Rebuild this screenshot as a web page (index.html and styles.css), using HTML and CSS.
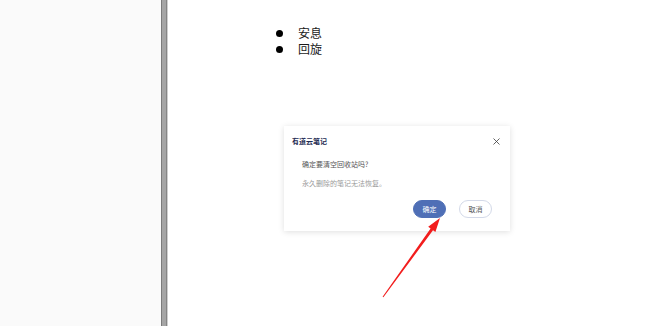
FILE: index.html
```html
<!DOCTYPE html>
<html lang="zh-CN">
<head>
    <meta charset="UTF-8">
    <meta name="viewport" content="width=device-width, initial-scale=1.0">
    <title>有道云笔记</title>
    <link rel="stylesheet" href="styles.css">
</head>
<body>
    <div class="sidebar"></div>
    <div class="divider"></div>
    <div class="page">
        <ul class="notes">
            <li><span class="dot"></span>安息</li>
            <li><span class="dot"></span>回旋</li>
        </ul>

        <div class="dialog">
            <div class="dialog-head">
                <span class="dialog-title">有道云笔记</span>
                <svg class="close" width="7" height="7" viewBox="0 0 7 7">
                    <path d="M0.5 0.5 L6.5 6.5 M6.5 0.5 L0.5 6.5" stroke="#3a3a3a" stroke-width="0.8" fill="none"/>
                </svg>
            </div>
            <p class="msg">确定要清空回收站吗?</p>
            <p class="hint">永久删除的笔记无法恢复。</p>
            <div class="actions">
                <button class="btn btn-ok">确定</button>
                <button class="btn btn-cancel">取消</button>
            </div>
        </div>
    </div>

    <svg class="arrow" width="650" height="326" viewBox="0 0 650 326">
        <polygon points="382.6,296.7 430.6,228.5 428.2,226.8 440,218 435.4,232 433,230.3 383.4,297.3" fill="#f21d1d"/>
    </svg>
</body>
</html>
```

FILE: styles.css
```css
body {
    margin: 0;
    height: 326px;
    display: flex;
    overflow: hidden;
    position: relative;
    font-family: 'Liberation Serif', 'Noto Sans CJK SC', serif;
    background: #ffffff;
}
.sidebar {
    width: 161px;
    background-color: #fafafa;
}
.divider {
    width: 7px;
    background: linear-gradient(to right,
        #7b7b7b 0, #7b7b7b 1px,
        #a5a5a5 1px, #a5a5a5 5px,
        #858585 5px, #858585 6px,
        #cfcfcf 6px, #cfcfcf 7px);
}
.page {
    flex: 1;
    position: relative;
    background-color: #ffffff;
}
.notes {
    list-style: none;
    margin: 25px 0 0;
    padding-left: 108px;
}
.notes li {
    display: flex;
    align-items: center;
    height: 16px;
    font-size: 12px;
    color: #1a1a1a;
}
.dot {
    width: 7px;
    height: 7px;
    border-radius: 50%;
    background-color: #000;
    margin-right: 15px;
}
.dialog {
    position: absolute;
    left: 116px;
    top: 126px;
    width: 226px;
    box-sizing: border-box;
    padding: 11px 10px 13px 8px;
    background-color: #fff;
    box-shadow: 0 1px 6px rgba(0, 0, 0, 0.13);
    font-family: 'Noto Sans CJK SC', 'Noto Sans', sans-serif;
}
.dialog-head {
    display: flex;
    justify-content: space-between;
    align-items: center;
    height: 8px;
}
.dialog-title {
    font-size: 7px;
    line-height: 8px;
    font-weight: 700;
    color: #1d2a52;
}
.close {
    display: block;
    margin-right: 0;
}
.msg,
.hint {
    margin: 0;
    padding-left: 10px;
    font-size: 7px;
    line-height: 8px;
}
.msg {
    margin-top: 15px;
    color: #555;
}
.hint {
    margin-top: 11px;
    color: #9a9a9a;
}
.actions {
    display: flex;
    justify-content: flex-end;
    gap: 13px;
    margin-top: 13px;
    padding-right: 8px;
}
.btn {
    width: 33px;
    height: 18px;
    padding: 0;
    border-radius: 9px;
    font-family: inherit;
    font-size: 7px;
    line-height: 16px;
    cursor: pointer;
}
.btn-ok {
    background-color: #4f6fb6;
    border: 1px solid #4f6fb6;
    color: #fff;
}
.btn-cancel {
    background-color: #fff;
    border: 1px solid #d3d9e8;
    color: #555;
}
.arrow {
    position: absolute;
    left: 0;
    top: 0;
    pointer-events: none;
}
```
